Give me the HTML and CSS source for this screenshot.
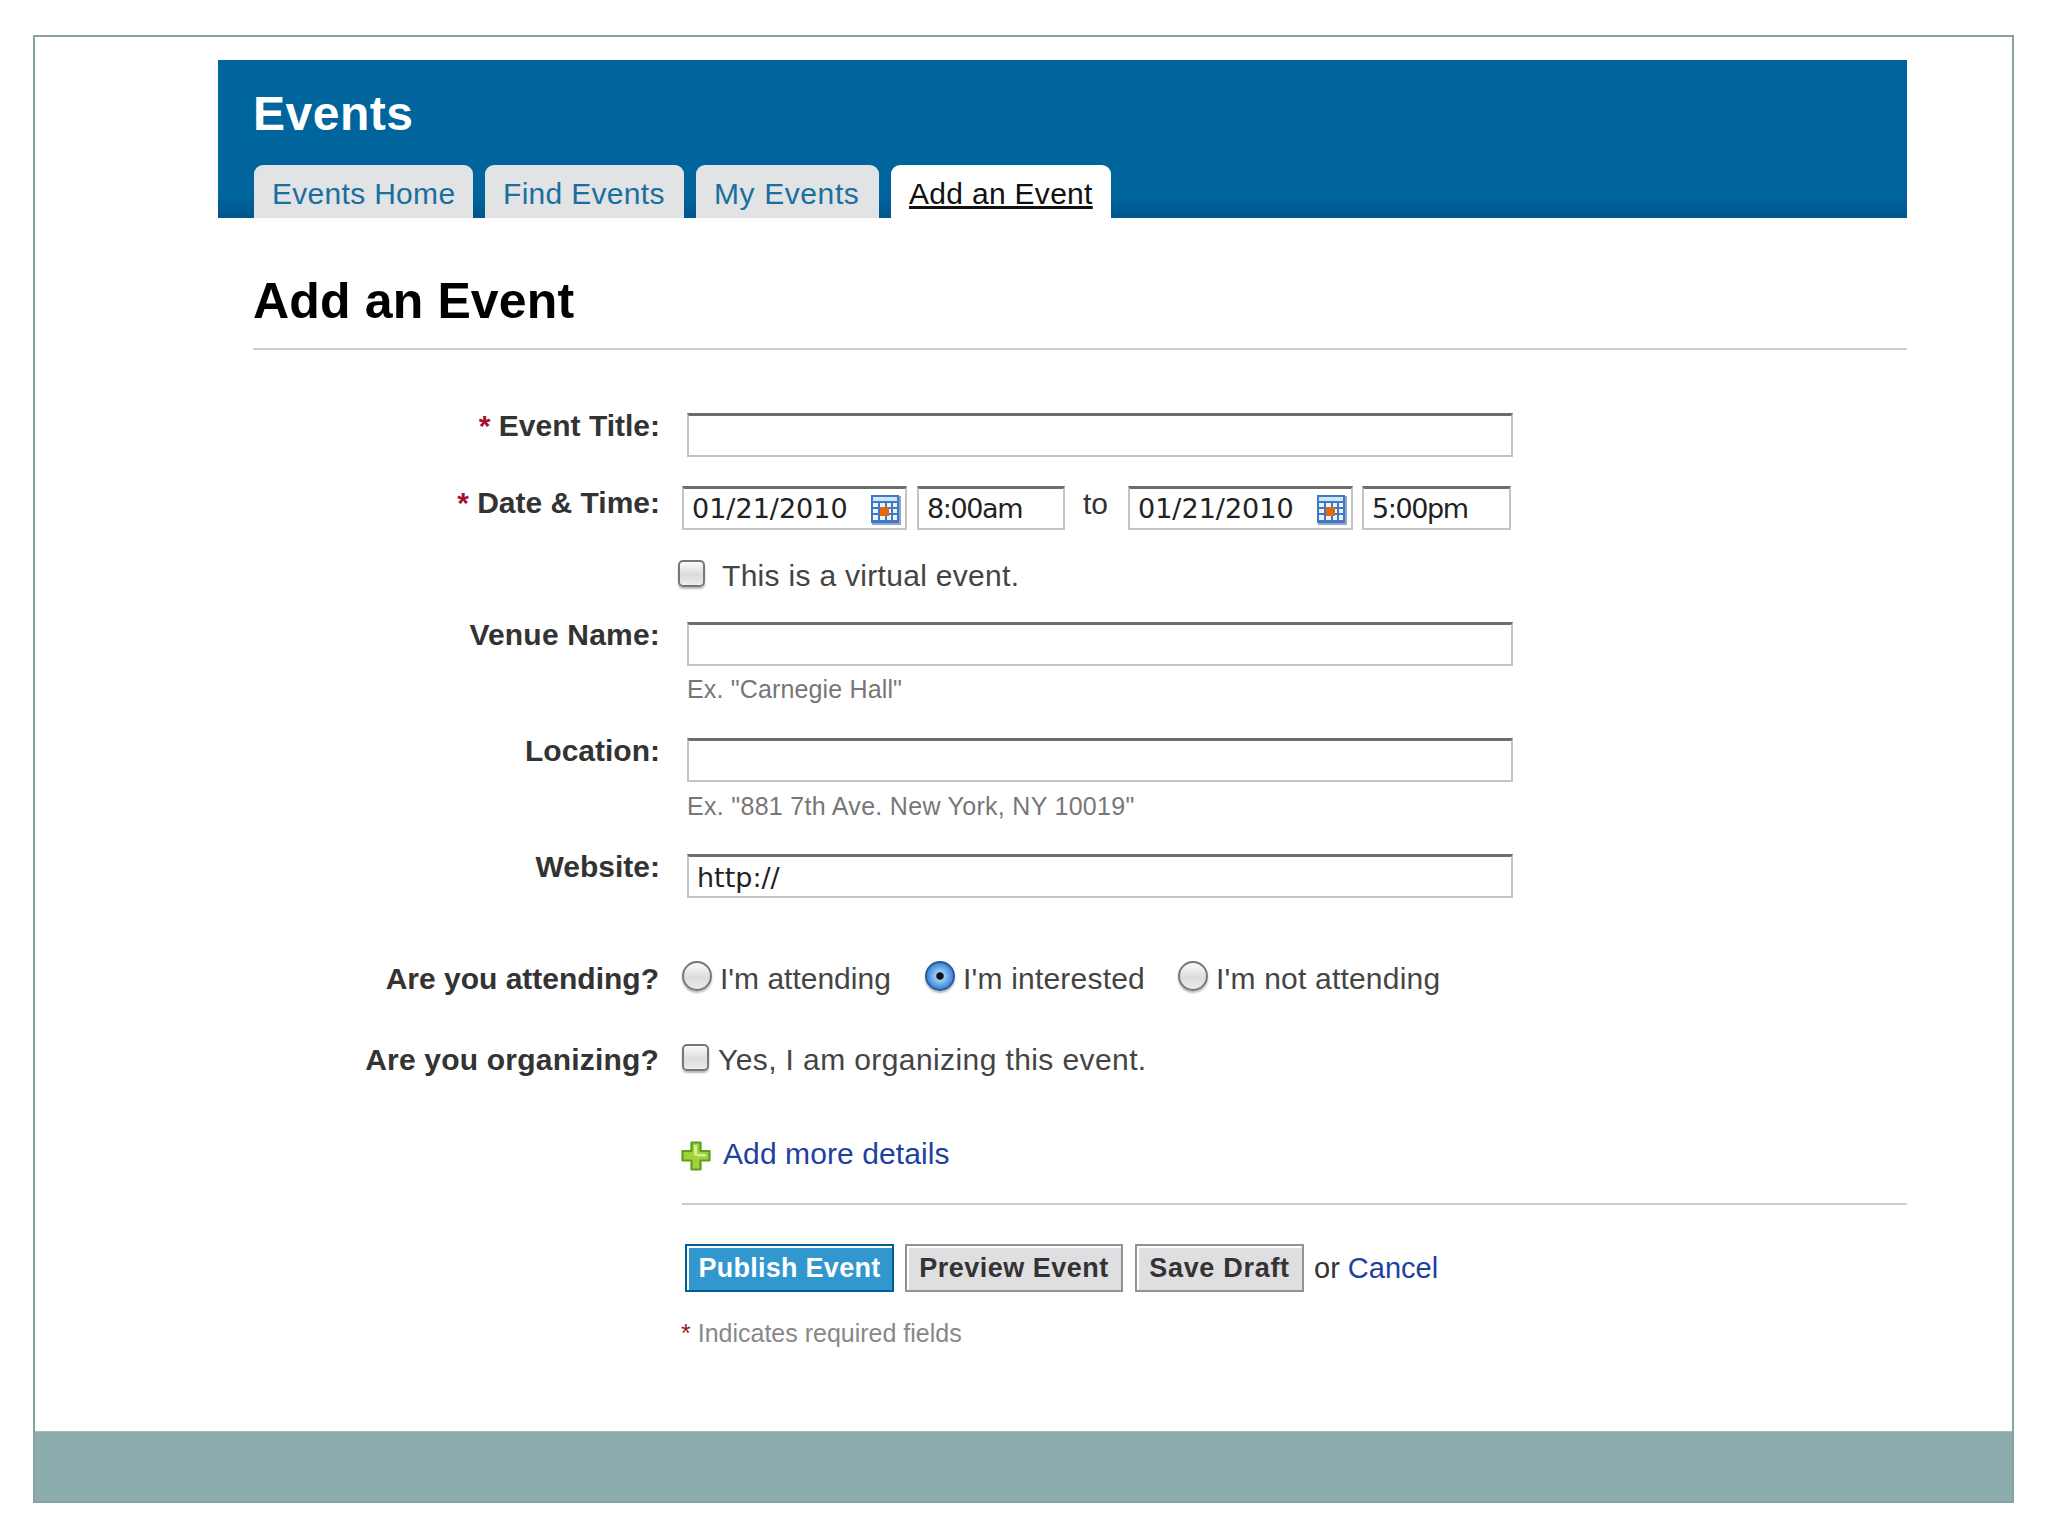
FILE: index.html
```html
<!DOCTYPE html>
<html lang="en">
<head>
<meta charset="utf-8">
<title>Add an Event</title>
<link rel="stylesheet" href="styles.css">
</head>
<body>
<div class="frame">
  <main class="page">
    <header class="masthead">
      <div class="brand">Events</div>
      <nav class="tabs">
        <a class="tab tab-home">Events Home</a>
        <a class="tab tab-find">Find Events</a>
        <a class="tab tab-my">My Events</a>
        <a class="tab tab-add is-active">Add an Event</a>
      </nav>
    </header>
    <h1 class="title">Add an Event</h1>
    <form class="form">
      <div class="row row-title">
        <label class="label"><span class="req">*</span> Event Title:</label>
        <input class="text wide" type="text">
      </div>
      <div class="row row-date">
        <label class="label label-date"><span class="req">*</span> Date &amp; Time:</label>
        <div class="when">
          <span class="date"><input class="text date-input" type="text" value="01/21/2010">
            <svg class="cal" viewBox="0 0 32 32" aria-hidden="true">
              <rect x="2" y="2" width="29" height="29" fill="#8fa6c4"/>
              <rect x="1" y="1" width="28" height="28" fill="#3f78c4"/>
              <rect x="3" y="3" width="24" height="4" fill="#cfe6f7"/>
              <g fill="#eef3fb">
                <rect x="3" y="9" width="5" height="4"/><rect x="10" y="9" width="5" height="4"/><rect x="17" y="9" width="4" height="4"/><rect x="23" y="9" width="4" height="4"/>
                <rect x="3" y="15" width="5" height="4"/><rect x="17" y="15" width="4" height="4"/><rect x="23" y="15" width="4" height="4"/>
                <rect x="3" y="21" width="5" height="5"/><rect x="10" y="21" width="5" height="5"/><rect x="17" y="21" width="4" height="5"/><rect x="23" y="21" width="4" height="5"/>
              </g>
              <rect x="10" y="13" width="9" height="9" fill="#e2690f"/>
            </svg>
          </span>
          <input class="text time" type="text" value="8:00am">
          <span class="to">to</span>
          <span class="date"><input class="text date-input" type="text" value="01/21/2010">
            <svg class="cal" viewBox="0 0 32 32" aria-hidden="true">
              <rect x="2" y="2" width="29" height="29" fill="#8fa6c4"/>
              <rect x="1" y="1" width="28" height="28" fill="#3f78c4"/>
              <rect x="3" y="3" width="24" height="4" fill="#cfe6f7"/>
              <g fill="#eef3fb">
                <rect x="3" y="9" width="5" height="4"/><rect x="10" y="9" width="5" height="4"/><rect x="17" y="9" width="4" height="4"/><rect x="23" y="9" width="4" height="4"/>
                <rect x="3" y="15" width="5" height="4"/><rect x="17" y="15" width="4" height="4"/><rect x="23" y="15" width="4" height="4"/>
                <rect x="3" y="21" width="5" height="5"/><rect x="10" y="21" width="5" height="5"/><rect x="17" y="21" width="4" height="5"/><rect x="23" y="21" width="4" height="5"/>
              </g>
              <rect x="10" y="13" width="9" height="9" fill="#e2690f"/>
            </svg>
          </span>
          <input class="text time time-end" type="text" value="5:00pm">
        </div>
      </div>
      <div class="row row-virtual">
        <span class="label"></span>
        <label class="choice choice-virtual"><input class="check" type="checkbox"><span class="choice-text">This is a virtual event.</span></label>
      </div>
      <div class="row row-venue">
        <label class="label label-venue">Venue Name:</label>
        <div class="field">
          <input class="text wide" type="text">
          <p class="hint hint-venue">Ex. "Carnegie Hall"</p>
        </div>
      </div>
      <div class="row row-location">
        <label class="label">Location:</label>
        <div class="field">
          <input class="text wide" type="text">
          <p class="hint hint-location">Ex. "881 7th Ave. New York, NY 10019"</p>
        </div>
      </div>
      <div class="row row-website">
        <label class="label">Website:</label>
        <input class="text wide" type="text" value="http://">
      </div>
      <div class="row row-attend">
        <label class="label label-q">Are you attending?</label>
        <div class="choices">
          <label class="choice choice-a"><input class="radio" type="radio" name="attend"><span class="choice-text">I'm attending</span></label>
          <label class="choice choice-b"><input class="radio" type="radio" name="attend" checked><span class="choice-text">I'm interested</span></label>
          <label class="choice choice-c"><input class="radio" type="radio" name="attend"><span class="choice-text">I'm not attending</span></label>
        </div>
      </div>
      <div class="row row-organize">
        <label class="label label-q label-org">Are you organizing?</label>
        <label class="choice choice-org"><input class="check check-org" type="checkbox"><span class="choice-text">Yes, I am organizing this event.</span></label>
      </div>
      <div class="row row-more">
        <span class="label"></span>
        <a class="more">
          <svg class="plus" viewBox="0 0 30 30" aria-hidden="true">
            <path d="M10.500 1.500h9v8.500h9v9.500h-9v9h-9v-9h-9v-9.500h9z" fill="#9fd13c" stroke="#5f9e1c" stroke-width="2.200" stroke-linejoin="round"/>
            <path d="M13 4h3v9h9v2.500h-9v-1h-3z" fill="#d9f08f"/>
          </svg>
          <span>Add more details</span>
        </a>
      </div>
      <div class="actions">
        <div class="buttons">
          <button class="btn btn-primary" type="button">Publish Event</button>
          <button class="btn btn-preview" type="button">Preview Event</button>
          <button class="btn btn-save" type="button">Save Draft</button>
          <span class="or">or <a class="cancel">Cancel</a></span>
        </div>
        <p class="note"><span class="req">*</span> Indicates required fields</p>
      </div>
    </form>
  </main>
  <footer class="footer"></footer>
</div>
</body>
</html>
```

FILE: styles.css
```css
* { box-sizing: border-box; }
html, body { margin: 0; padding: 0; background: #fff; }
body { font-family: "Liberation Sans", Arial, sans-serif; color: #333; }

.frame {
  width: 1981px;
  height: 1468px;
  margin: 35px 0 0 33px;
  border: 2px solid #86a3a0;
  display: flex;
  flex-direction: column;
}
.page { flex: 1; margin-left: 183px; width: 1689px; }
.footer { height: 70px; flex: none; background: #8cacad; border-top: 1px solid #a9b9b9; }

.masthead {
  height: 158px;
  margin-top: 23px;
  padding: 0 0 0 35px;
  background: linear-gradient(#00659c 0, #00659c 85%, #00558d 100%);
  display: flex;
  flex-direction: column;
}
.brand { color: #fff; font-weight: bold; font-size: 48px; line-height: 56px; margin-top: 26px; letter-spacing: 0.5px; }
.tabs { display: flex; margin-top: 23px; margin-left: 1px; gap: 12px; }
.tab {
  height: 53px;
  border-radius: 9px 9px 0 0;
  background: #e2e3e4;
  color: #1a6f9f;
  font-size: 30px;
  line-height: 57px;
  letter-spacing: 0.3px;
  padding-left: 18px;
}
.tab-home { width: 219px; }
.tab-find { width: 199px; }
.tab-my { width: 183px; letter-spacing: 0.6px; }
.tab-add { width: 220px; }
.tab.is-active { background: #fff; color: #111; text-decoration: underline; }

.title {
  margin: 0 0 0 35px;
  padding-top: 54px;
  height: 132px;
  border-bottom: 2px solid #cdcdcf;
  color: #000;
  font-size: 50px;
  line-height: 58px;
  font-weight: bold;
  letter-spacing: 0.15px;
}

.form { display: block; }
.row { display: flex; align-items: flex-start; }
.label {
  flex: none;
  width: 442px;
  margin-right: 22px;
  text-align: right;
  color: #333;
  font-weight: bold;
  font-size: 30px;
  line-height: 34px;
}
.req { color: #a3122a; }

.text {
  display: block;
  height: 44px;
  border: 2px solid #c4c4c6;
  border-top: 3px solid #6d6d6f;
  background: #fff;
  font-family: "DejaVu Sans", sans-serif;
  font-size: 27px;
  color: #222;
  padding: 0 0 0 8px;
  margin: 0;
  outline: none;
}
.wide { width: 826px; margin-left: 5px; margin-top: 4px; padding-top: 2px; }

.row-title { margin-top: 58px; }
.row-title .label { margin-top: 1px; }
.row-title .wide { margin-top: 5px; }

.row-date { margin-top: 29px; }
.when { display: flex; align-items: flex-start; }
.date { position: relative; display: block; }
.date-input { width: 225px; }
.cal { position: absolute; left: 188px; top: 8px; width: 32px; height: 32px; }
.time { width: 148px; margin-left: 10px; letter-spacing: -1.4px; }
.to { width: 63px; padding-right: 2px; text-align: center; font-size: 30px; line-height: 36px; color: #333; }
.time-end { width: 149px; margin-left: 9px; }

.choice { display: flex; align-items: center; font-size: 30px; line-height: 34px; color: #444; }
.check, .radio {
  appearance: none;
  -webkit-appearance: none;
  margin: 0;
  flex: none;
  background: linear-gradient(#fafafa 0, #dcdcdc 55%, #ececec 100%);
  border: 2px solid #77777a;
  box-shadow: 0 2px 2px #b8b8b8;
}
.check { width: 27px; height: 27px; border-radius: 5px; }
.radio { width: 30px; height: 30px; border-radius: 50%; margin-top: -6px; }
.radio:checked {
  border-color: #2a5a9c;
  background: radial-gradient(circle, #111 0, #111 17%, #9ccaf5 24%, #3d86dc 70%, #2a6fc8 100%);
}

.row-virtual { margin-top: 29px; height: 32px; }
.choice-virtual { margin-left: -4px; }
.choice-virtual .choice-text { margin-left: 17px; letter-spacing: 0.3px; }
.choice-virtual .check { margin-top: -6px; }

.row-venue { margin-top: 27px; }
.label-venue { letter-spacing: 0.2px; }
.field { display: block; }
.hint { margin: 0 0 0 5px; color: #777; font-size: 25px; line-height: 30px; }
.hint-venue { margin-top: 8px; padding-bottom: 30px; letter-spacing: 0.15px; }
.hint-location { margin-top: 9px; padding-bottom: 29px; letter-spacing: 0.3px; }

.row-attend { margin-top: 64px; }
.label-q { width: 441px; margin-right: 23px; }
.label-org { letter-spacing: 0.2px; }
.choices { display: flex; }
.choice-a { width: 243px; }
.choice-b { width: 253px; }
.choice-b .choice-text, .choice-c .choice-text { letter-spacing: 0.2px; }
.choice-text { margin-left: 8px; }
.row-organize { margin-top: 47px; }
.choice-org { margin-left: 0; }
.choice-org .check { margin-top: -6px; }
.choice-org .choice-text { margin-left: 9px; letter-spacing: 0.4px; }

.row-more { margin-top: 60px; }
.more { display: flex; align-items: flex-start; color: #1d41a1; font-size: 30px; line-height: 34px; letter-spacing: 0.1px; margin-left: -1px; }
.plus { width: 30px; height: 30px; margin-top: 4px; margin-right: 12px; flex: none; }

.actions {
  margin: 32px 0 0 464px;
  border-top: 2px solid #cdcdcf;
  padding-top: 39px;
}
.buttons { display: flex; align-items: center; margin-left: 3px; }
.btn {
  height: 48px;
  padding: 0;
  font-family: "Liberation Sans", Arial, sans-serif;
  font-size: 27px;
  font-weight: bold;
  letter-spacing: 0.5px;
  color: #333;
  background: #dfdee1;
  border: 2px solid #929294;
  box-shadow: inset 2px 2px 0 #fff;
}
.btn-primary { width: 209px; color: #fff; background: #3296cf; border-color: #005f95; margin-right: 11px; letter-spacing: 0.25px; }
.btn-preview { width: 218px; margin-right: 12px; }
.btn-save { width: 169px; margin-right: 10px; letter-spacing: 0.7px; }
.or { font-size: 29px; color: #333; }
.note { margin: 26px 0 0 -1px; font-size: 25px; line-height: 30px; color: #888; }
.cancel { color: #1d41a1; }
```
